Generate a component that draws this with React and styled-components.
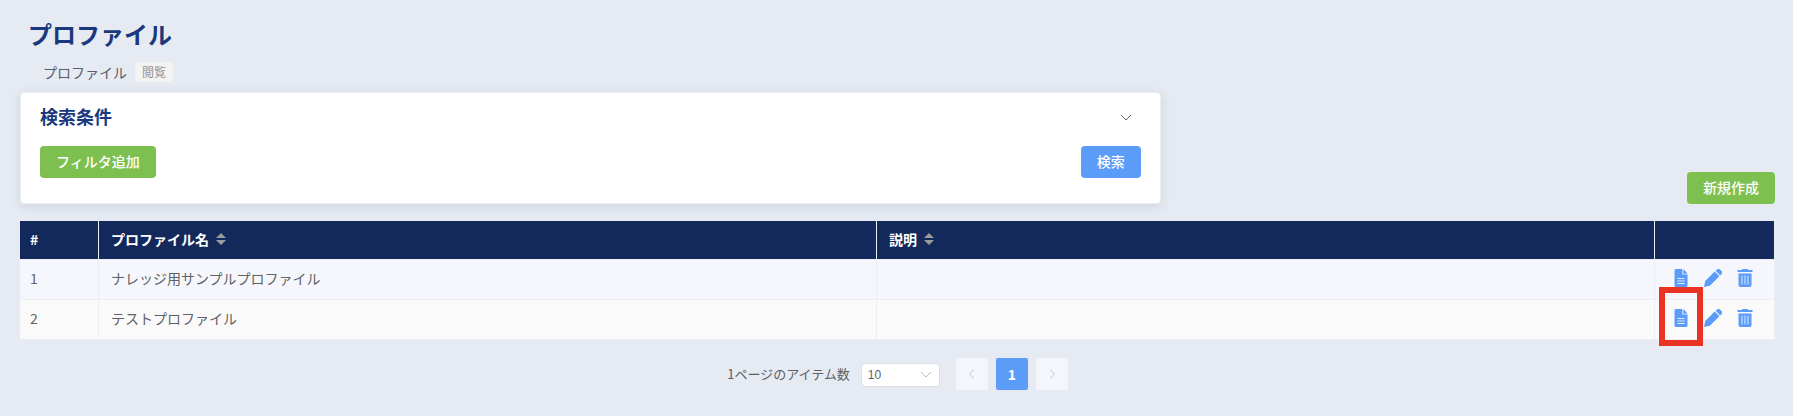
import React, { useState } from "react";
import styled, { createGlobalStyle } from "styled-components";

const GlobalStyle = createGlobalStyle`
  * {
    box-sizing: border-box;
  }

  body {
    margin: 0;
    background: #e6eaf3;
    color: #5a5e66;
    font-family: "Noto Sans CJK JP", "Noto Sans", sans-serif;
    font-size: 14px;
    line-height: 20px;
  }
`;

const Page = styled.main`
  padding: 18px 18px 24px 20px;
`;

const Title = styled.h1`
  margin: 0;
  padding-left: 8px;
  color: #1a387d;
  font-size: 24px;
  line-height: 32px;
`;

const Breadcrumb = styled.div`
  display: flex;
  align-items: center;
  gap: 8px;
  margin: 11px 0 10px;
  padding-left: 23px;
  height: 21px;
`;

const Tag = styled.span`
  padding: 0 7px;
  border-radius: 3px;
  background: #f3f3f4;
  color: #929498;
  font-size: 12px;
`;

const TopRow = styled.div`
  display: flex;
  align-items: flex-end;
  justify-content: space-between;
  margin-bottom: 17px;
`;

const Card = styled.section`
  width: 65%;
  padding: 11px 19px 25px;
  border: 1px solid #ebeef5;
  border-radius: 4px;
  background: #fff;
  box-shadow: 0 2px 12px rgba(0, 0, 0, 0.1);
`;

const CardRow = styled.div`
  display: flex;
  align-items: center;
  justify-content: space-between;

  & + & {
    margin-top: 18px;
  }
`;

const CardTitle = styled.h2`
  margin: 0;
  color: #1a387d;
  font-size: 18px;
  line-height: 24px;
`;

const IconButton = styled.button`
  display: grid;
  place-items: center;
  position: relative;
  width: 18px;
  height: 18px;
  padding: 0;
  border: 0;
  background: none;
  color: ${(props) => props.$color || "#5b9cf8"};
  cursor: pointer;
`;

const ToggleWrap = styled.div`
  padding: 4px 6px 0 0;
`;

const Button = styled.button`
  height: 32px;
  padding: 0 16px 2px;
  border: 0;
  border-radius: 4px;
  background: ${(props) => (props.$green ? "#7ec050" : "#5b9cf8")};
  color: #fff;
  font: inherit;
  font-weight: 500;
  cursor: pointer;
`;

const Table = styled.table`
  width: 100%;
  table-layout: fixed;
  border-collapse: separate;
  border-spacing: 0;
`;

const Th = styled.th`
  width: ${(props) => props.$width || "auto"};
  height: 39px;
  padding: 0 10px 3px ${(props) => props.$left || "12px"};
  border-right: 1px solid #ebeef5;
  border-bottom: 1px solid #ebeef5;
  background: #13295c;
  color: #fff;
  font-weight: 700;
  text-align: left;
`;

const Td = styled.td`
  height: 40px;
  padding: 0 10px 3px ${(props) => props.$left || "12px"};
  border-right: 1px solid #ebeef5;
  border-bottom: 1px solid #ebeef5;
  color: #606266;
`;

const Row = styled.tr`
  background: ${(props) => (props.$striped ? "#fafafa" : "#f5f7fc")};
`;

const SortLabel = styled.div`
  display: flex;
  align-items: center;
  gap: 7px;
`;

const Actions = styled.div`
  display: flex;
  gap: 14px;
`;

const Highlight = styled.span`
  position: absolute;
  inset: -22px -13px -19px -13px;
  border: 6px solid #ea3323;
  pointer-events: none;
`;

const Pagination = styled.nav`
  display: flex;
  align-items: center;
  justify-content: center;
  gap: 8px;
  margin-top: 18px;
`;

const SizeLabel = styled.label`
  display: flex;
  align-items: center;
  gap: 11px;
  margin-right: 8px;
  font-size: 13px;
`;

const SelectWrap = styled.span`
  display: grid;
  align-items: center;
  padding-top: 2px;

  & > * {
    grid-area: 1 / 1;
  }

  & > svg {
    justify-self: end;
    margin-right: 8px;
    pointer-events: none;
  }
`;

const Select = styled.select`
  appearance: none;
  width: 79px;
  height: 24px;
  padding: 0 6px;
  border: 1px solid #dcdfe6;
  border-radius: 4px;
  background: #fff;
  color: #606266;
  font-family: "Liberation Sans", sans-serif;
  font-size: 12px;
`;

const PageButton = styled.button`
  display: grid;
  place-items: center;
  width: 32px;
  height: 32px;
  padding: 0;
  border: 0;
  border-radius: 2px;
  background: ${(props) => (props.$active ? "#5b9cf8" : "#f4f6fb")};
  color: ${(props) => (props.$active ? "#fff" : "#b4b8c0")};
  font: inherit;
  font-weight: 700;
`;

const paths = {
  down: "M1 3l5 5 5-5",
  left: "M8 1L3 6l5 5",
  right: "M4 1l5 5-5 5",
};

function Chevron({ dir, size = 12, color = "currentColor" }) {
  return (
    <svg width={size} height={size} viewBox="0 0 12 12" fill="none" stroke={color}>
      <path d={paths[dir]} />
    </svg>
  );
}

function SortIcon() {
  return (
    <svg width="10" height="12" viewBox="0 0 10 12" fill="#9b9b9b">
      <path d="M5 0l5 5H0zM5 12l5-5H0z" />
    </svg>
  );
}

function FileIcon() {
  return (
    <svg width="18" height="18" viewBox="0 0 18 18" fill="currentColor">
      <path d="M4 0h6v5.6h5.500v10.900A1.500 1.500 0 0 1 14 18H4a1.500 1.500 0 0 1-1.500-1.500v-15A1.500 1.500 0 0 1 4 0z" />
      <path d="M10 0v5.600h5.500z" opacity="0.4" />
      <path d="M11.500 0l4 4.400h-4z" />
      <path d="M5.500 9.500h7M5.500 12h7M5.500 14.500h7" stroke="#fff" strokeOpacity="0.8" fill="none" />
    </svg>
  );
}

function PencilIcon() {
  return (
    <svg width="18" height="18" viewBox="0 0 18 18" fill="currentColor">
      <path d="M10.700 2.600l4.700 4.700L5.800 16.700 0 18l1.200-5.900z" />
      <path d="M11.600 1.800L12.800.7a2.400 2.400 0 0 1 3.400 0l1.100 1.100a2.400 2.400 0 0 1 0 3.400l-1.100 1.200z" />
    </svg>
  );
}

function TrashIcon() {
  return (
    <svg width="18" height="18" viewBox="0 0 18 18" fill="currentColor">
      <path d="M6.500 0h5l.8 1h4.200v2h-15V1h4.200z" />
      <path d="M2.500 4.500h13v11.700a1.800 1.800 0 0 1-1.800 1.800H4.300a1.800 1.800 0 0 1-1.800-1.800z" />
      <path d="M6 6.500v9M9 6.500v9M12 6.500v9" stroke="#fff" strokeOpacity="0.8" fill="none" />
    </svg>
  );
}

const profiles = [
  { id: 1, name: "ナレッジ用サンプルプロファイル", description: "" },
  { id: 2, name: "テストプロファイル", description: "", highlighted: true },
];

function SearchPanel() {
  return (
    <Card>
      <CardRow>
        <CardTitle>検索条件</CardTitle>
        <ToggleWrap>
          <IconButton type="button" $color="#606266" aria-label="開閉">
            <Chevron dir="down" />
          </IconButton>
        </ToggleWrap>
      </CardRow>
      <CardRow>
        <Button type="button" $green>
          フィルタ追加
        </Button>
        <Button type="button">検索</Button>
      </CardRow>
    </Card>
  );
}

function ProfileTable() {
  return (
    <Table>
      <thead>
        <tr>
          <Th $width="79px" $left="10px">
            #
          </Th>
          <Th>
            <SortLabel>
              プロファイル名
              <SortIcon />
            </SortLabel>
          </Th>
          <Th>
            <SortLabel>
              説明
              <SortIcon />
            </SortLabel>
          </Th>
          <Th $width="120px" aria-label="操作" />
        </tr>
      </thead>
      <tbody>
        {profiles.map((profile, index) => (
          <Row key={profile.id} $striped={index % 2 === 1}>
            <Td $left="10px">{profile.id}</Td>
            <Td>{profile.name}</Td>
            <Td>{profile.description}</Td>
            <Td $left="17px">
              <Actions>
                <IconButton type="button" aria-label="詳細">
                  <FileIcon />
                  {profile.highlighted && <Highlight />}
                </IconButton>
                <IconButton type="button" aria-label="編集">
                  <PencilIcon />
                </IconButton>
                <IconButton type="button" aria-label="削除">
                  <TrashIcon />
                </IconButton>
              </Actions>
            </Td>
          </Row>
        ))}
      </tbody>
    </Table>
  );
}

function Pager() {
  const [size, setSize] = useState("10");

  return (
    <Pagination>
      <SizeLabel htmlFor="page-size">
        1ページのアイテム数
        <SelectWrap>
          <Select id="page-size" value={size} onChange={(e) => setSize(e.target.value)}>
            <option value="10">10</option>
            <option value="20">20</option>
            <option value="50">50</option>
          </Select>
          <Chevron dir="down" color="#b4b8c0" />
        </SelectWrap>
      </SizeLabel>
      <PageButton type="button" disabled aria-label="前へ">
        <Chevron dir="left" size={10} />
      </PageButton>
      <PageButton type="button" $active>
        1
      </PageButton>
      <PageButton type="button" disabled aria-label="次へ">
        <Chevron dir="right" size={10} />
      </PageButton>
    </Pagination>
  );
}

function App() {
  return (
    <>
      <GlobalStyle />
      <Page>
        <Title>プロファイル</Title>
        <Breadcrumb>
          プロファイル
          <Tag>閲覧</Tag>
        </Breadcrumb>
        <TopRow>
          <SearchPanel />
          <Button type="button" $green>
            新規作成
          </Button>
        </TopRow>
        <ProfileTable />
        <Pager />
      </Page>
    </>
  );
}

export default App;
